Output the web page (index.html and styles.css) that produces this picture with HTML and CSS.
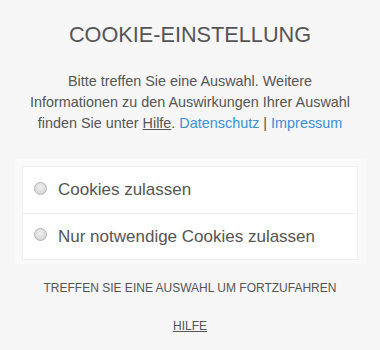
FILE: index.html
```html
<!DOCTYPE html>
<html lang="de">
<head>
<meta charset="utf-8">
<link rel="stylesheet" href="styles.css">
</head>
<body>
<div class="page">
  <h1 class="title">COOKIE-EINSTELLUNG</h1>
  <p class="intro">Bitte treffen Sie eine Auswahl. Weitere Informationen zu den Auswirkungen Ihrer Auswahl finden Sie unter <a class="help-link" href="#">Hilfe</a>. <a class="blue" href="#">Datenschutz</a> | <a class="blue" href="#">Impressum</a></p>
  <div class="options-wrap">
    <div class="options">
      <label class="option"><span class="radio"></span><span>Cookies zulassen</span></label>
      <label class="option"><span class="radio"></span><span>Nur notwendige Cookies zulassen</span></label>
    </div>
  </div>
  <p class="notice">TREFFEN SIE EINE AUSWAHL UM FORTZUFAHREN</p>
  <p class="footer"><a class="help-upper" href="#">HILFE</a></p>
</div>
</body>
</html>
```
FILE: styles.css
```css
html, body {
  margin: 0;
  padding: 0;
  background: #f6f6f6;
}
body {
  font-family: "Liberation Sans", Arial, sans-serif;
  color: #555;
}
.page {
  width: 380px;
  height: 350px;
  display: flex;
  flex-direction: column;
  align-items: center;
}
.title {
  margin: 22px 0 0;
  font-size: 21.7px;
  line-height: 26px;
  font-weight: normal;
  color: #555;
}
.intro {
  margin: 23px 0 0;
  width: 330px;
  text-align: center;
  font-size: 14.4px;
  line-height: 21px;
  color: #555;
}
.help-link {
  color: #555;
  text-decoration: underline;
}
.blue {
  color: #3a8fd8;
  text-decoration: none;
}
.options-wrap {
  margin-top: 25px;
  width: 336px;
  padding: 7px 8px 4px;
  background: #f9f9f9;
}
.options {
  background: #fff;
  border: 1px solid #efefef;
  display: flex;
  flex-direction: column;
}
.option {
  display: flex;
  align-items: center;
  height: 45px;
  padding-left: 11px;
  font-size: 17px;
  color: #555;
}
.option:first-child {
  height: 46px;
}
.option + .option {
  border-top: 1px solid #efefef;
}
.radio {
  width: 11px;
  height: 11px;
  border-radius: 50%;
  border: 1px solid #b5b5b5;
  background: radial-gradient(circle at 50% 40%, #f0f0f0 0%, #dcdcdc 60%, #c8c8c8 100%);
  margin-right: 11px;
  position: relative;
  top: -2px;
  flex: none;
}
.notice {
  margin: 17px 0 0;
  font-size: 12px;
  line-height: 14px;
  color: #555;
}
.footer {
  margin: 24px 0 0;
  font-size: 12px;
  line-height: 14px;
}
.help-upper {
  color: #555;
  text-decoration: underline;
}
```
